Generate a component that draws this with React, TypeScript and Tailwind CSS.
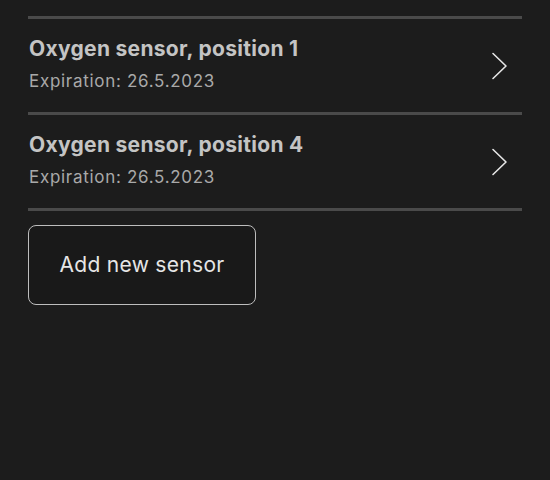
import React from 'react';

const sensors = [
  { name: 'Oxygen sensor, position 1', expiration: '26.5.2023' },
  { name: 'Oxygen sensor, position 4', expiration: '26.5.2023' },
];

function Chevron() {
  return (
    <svg width="18" height="28" viewBox="0 0 18 28" fill="none" className="shrink-0">
      <path d="M2 1.5 L15 14 L2 26.5" stroke="#e6e6e6" strokeWidth="1.6" strokeLinecap="round" strokeLinejoin="round" />
    </svg>
  );
}

export default function App() {
  return (
    <div
      className="w-[550px] h-[480px] bg-[#1c1c1c] pt-[16px] px-[28px]"
      style={{ fontFamily: 'Inter, Roboto, "Noto Sans", sans-serif' }}
    >
      <div className="w-[494px]">
        <div className="h-[3px] bg-[#4a4a4a]" />
        {sensors.map((s) => (
          <div key={s.name}>
            <div className="h-[93px] flex items-center justify-between pl-[1px] pr-[13px]">
              <div className="flex flex-col -mt-[3px]">
                <span className="text-[21px] font-bold text-[#c4c4c4] leading-[26px] tracking-[0.3px]">{s.name}</span>
                <span className="text-[17px] text-[#a9a9a9] leading-[22px] mt-[8px] tracking-[0.7px]">
                  Expiration: {s.expiration}
                </span>
              </div>
              <Chevron />
            </div>
            <div className="h-[3px] bg-[#4a4a4a]" />
          </div>
        ))}
        <button className="mt-[14px] w-[228px] h-[80px] rounded-[8px] border border-[#bdbdbd] bg-[#191919] text-[21px] text-[#e6e6e6] tracking-[0.3px] flex items-center justify-center">
          Add new sensor
        </button>
      </div>
    </div>
  );
}
